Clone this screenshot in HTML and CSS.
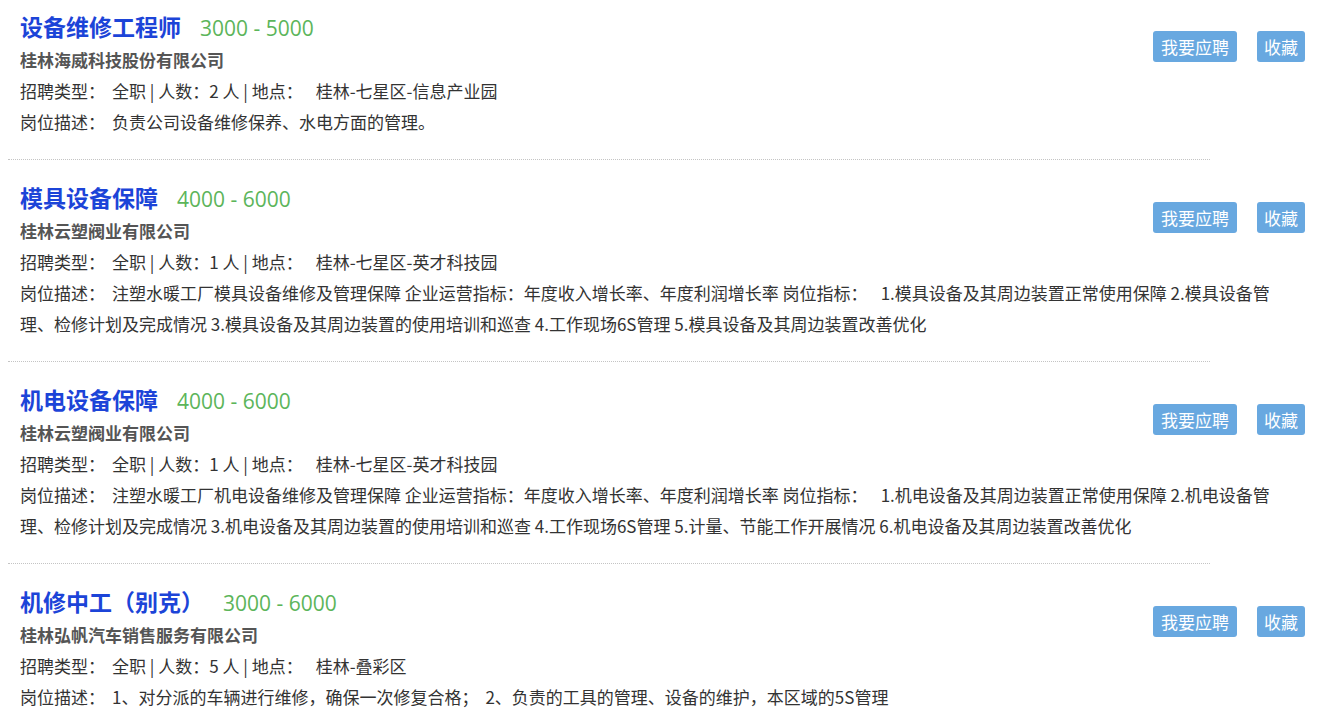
FILE: index.html
```html
<!DOCTYPE html>
<html lang="zh-CN">
<head>
  <meta charset="UTF-8">
  <title>招聘职位</title>
  <link rel="stylesheet" href="styles.css">
</head>
<body>
  <div class="job-list">
    <div class="job first">
      <div class="actions">
        <button class="btn btn-apply">我要应聘</button>
        <button class="btn">收藏</button>
      </div>
      <h2 class="title">设备维修工程师<span class="salary">3000 - 5000</span></h2>
      <p class="company">桂林海威科技股份有限公司</p>
      <p class="line">招聘类型：<i class="gap"></i>全职 | 人数：2 人 | 地点：<i class="gap wide"></i>桂林-七星区-信息产业园</p>
      <p class="line">岗位描述：<i class="gap"></i>负责公司设备维修保养、水电方面的管理。</p>
    </div>

    <div class="job">
      <div class="actions">
        <button class="btn btn-apply">我要应聘</button>
        <button class="btn">收藏</button>
      </div>
      <h2 class="title">模具设备保障<span class="salary">4000 - 6000</span></h2>
      <p class="company">桂林云塑阀业有限公司</p>
      <p class="line">招聘类型：<i class="gap"></i>全职 | 人数：1 人 | 地点：<i class="gap wide"></i>桂林-七星区-英才科技园</p>
      <p class="line">岗位描述：<i class="gap"></i>注塑水暖工厂模具设备维修及管理保障 企业运营指标：年度收入增长率、年度利润增长率 岗位指标：<i class="gap wide"></i>1.模具设备及其周边装置正常使用保障 2.模具设备管理、检修计划及完成情况 3.模具设备及其周边装置的使用培训和巡查 4.工作现场6S管理 5.模具设备及其周边装置改善优化</p>
    </div>

    <div class="job">
      <div class="actions">
        <button class="btn btn-apply">我要应聘</button>
        <button class="btn">收藏</button>
      </div>
      <h2 class="title">机电设备保障<span class="salary">4000 - 6000</span></h2>
      <p class="company">桂林云塑阀业有限公司</p>
      <p class="line">招聘类型：<i class="gap"></i>全职 | 人数：1 人 | 地点：<i class="gap wide"></i>桂林-七星区-英才科技园</p>
      <p class="line">岗位描述：<i class="gap"></i>注塑水暖工厂机电设备维修及管理保障 企业运营指标：年度收入增长率、年度利润增长率 岗位指标：<i class="gap wide"></i>1.机电设备及其周边装置正常使用保障 2.机电设备管理、检修计划及完成情况 3.机电设备及其周边装置的使用培训和巡查 4.工作现场6S管理 5.计量、节能工作开展情况 6.机电设备及其周边装置改善优化</p>
    </div>

    <div class="job">
      <div class="actions">
        <button class="btn btn-apply">我要应聘</button>
        <button class="btn">收藏</button>
      </div>
      <h2 class="title">机修中工（别克）<span class="salary">3000 - 6000</span></h2>
      <p class="company">桂林弘帆汽车销售服务有限公司</p>
      <p class="line">招聘类型：<i class="gap"></i>全职 | 人数：5 人 | 地点：<i class="gap wide"></i>桂林-叠彩区</p>
      <p class="line">岗位描述：<i class="gap"></i>1、对分派的车辆进行维修，确保一次修复合格；<i class="gap"></i>2、负责的工具的管理、设备的维护，本区域的5S管理</p>
    </div>
  </div>
</body>
</html>
```

FILE: styles.css
```css
body {
  margin: 0;
  background: #fff;
  font-family: "Noto Sans CJK SC", "Noto Sans", sans-serif;
  color: #333;
}
.job-list {
  width: 1335px;
}
.job {
  padding: 19px 30px 0 20px;
}
.job.first {
  padding-top: 8px;
}
.job::after {
  content: "";
  display: block;
  clear: both;
  margin: 22px 0 0 -12px;
  width: 1202px;
  border-top: 1px dotted #c4c4c4;
}
.title {
  margin: 0;
  height: 36px;
  font-size: 23px;
  line-height: 36px;
  font-weight: bold;
  color: #1c44d8;
}
.salary {
  margin-left: 19px;
  font-family: "Open Sans", "Noto Sans CJK SC", sans-serif;
  font-size: 21px;
  line-height: 1;
  font-weight: normal;
  color: #5cb55a;
}
.company {
  margin: 0;
  height: 31px;
  font-size: 17px;
  line-height: 31px;
  font-weight: bold;
  color: #555;
}
.line {
  margin: 0;
  padding-right: 14px;
  font-size: 17px;
  line-height: 31px;
  color: #333;
}
.gap {
  display: inline-block;
  width: 7px;
}
.gap.wide {
  width: 13px;
}
.actions {
  float: right;
  display: flex;
  gap: 20px;
  margin-top: 23px;
}
.btn {
  font-family: inherit;
  font-size: 17px;
  height: 31px;
  line-height: 31px;
  padding: 0 7px;
  border: none;
  border-radius: 3px;
  background: #68a8e0;
  color: #fff;
  cursor: pointer;
}
.btn-apply {
  padding: 0 8px;
}
```
